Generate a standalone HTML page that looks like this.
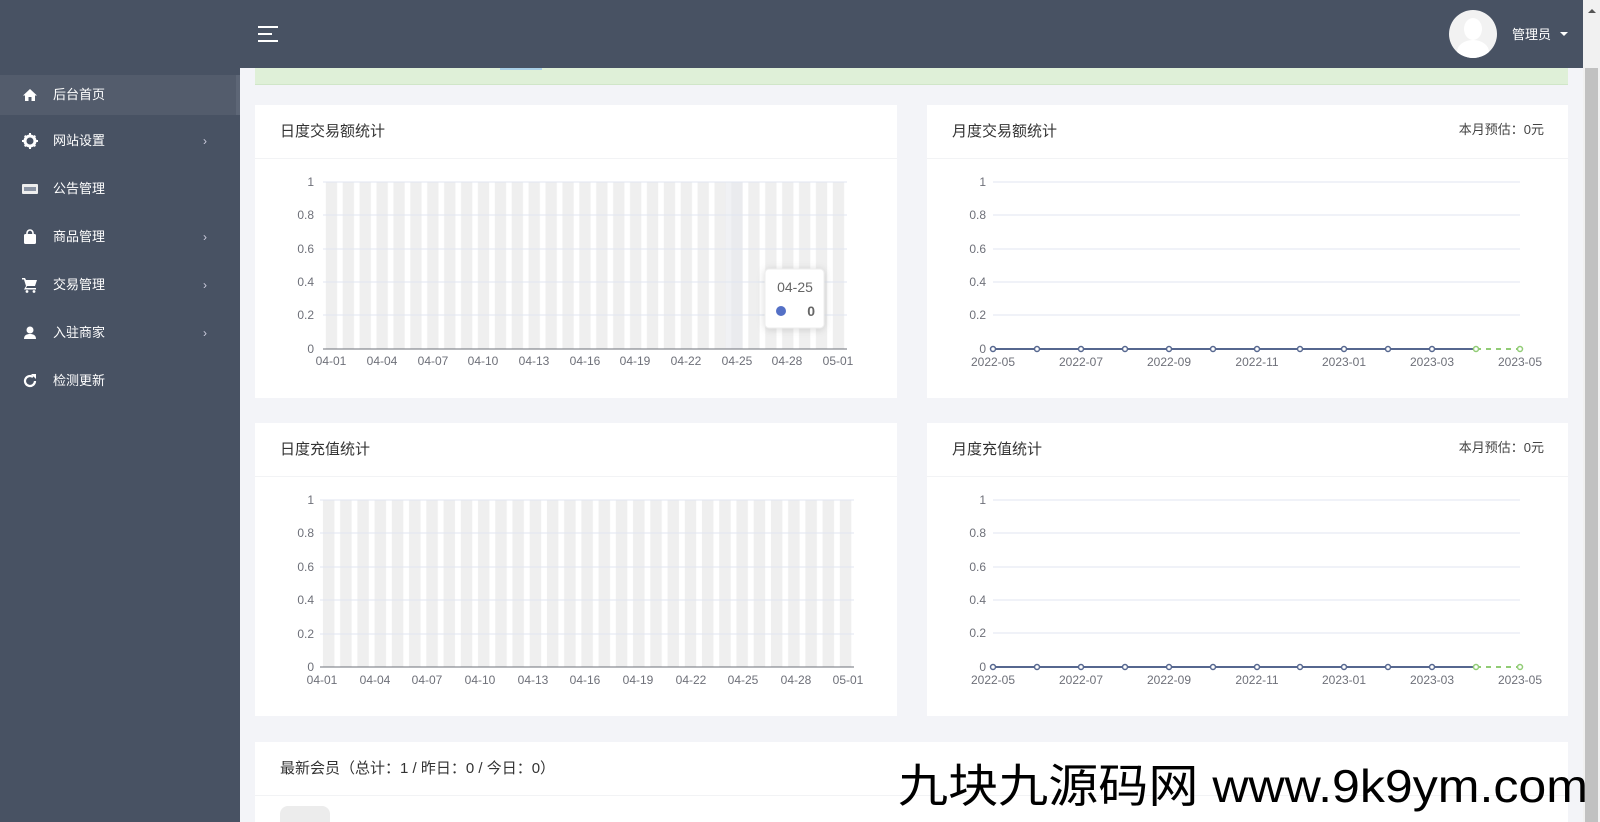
<!DOCTYPE html>
<html style="width:1600px;height:822px;overflow:hidden"><head><meta charset="utf-8"><style>
*{margin:0;padding:0;box-sizing:border-box}
body{width:1600px;height:822px;overflow:hidden;background:#f3f4f8;font-family:"Liberation Sans","Noto Sans CJK SC",sans-serif;position:relative}
.abs{position:absolute}
#side{left:0;top:0;width:240px;height:822px;background:#485263}
#head{left:240px;top:0;width:1343px;height:68px;background:#485263}
.mi{position:absolute;left:0;width:240px;height:40px;color:#fff;font-size:13px;line-height:40px}
.mi .t{position:absolute;left:53px}
.mi .ar{position:absolute;left:203px;font-size:12px;color:#ccd}
.mi svg{position:absolute;left:22px;top:12px}
.card{position:absolute;background:#fff}
.card .h{position:absolute;left:25px;top:0;height:54px;line-height:54px;font-size:15px;color:#333}
.card .dv{position:absolute;left:0;right:0;top:53px;height:1px;background:#f2f3f5}
.card .r{position:absolute;right:24px;top:0;line-height:50px;font-size:13px;color:#444}
</style></head><body>
<div id="side" class="abs">
 <div class="mi" style="top:75px;background:#535c6c;border-right:4px solid #5d6676"><svg width="16" height="16" viewBox="0 0 16 16"><path d="M8 2L1 8.5h2V14h3.5v-4h3v4H13V8.5h2z" fill="#fff"/></svg><span class="t">后台首页</span></div>
 <div class="mi" style="top:121px"><svg width="16" height="16" viewBox="0 0 16 16"><circle cx="8" cy="8" r="5" fill="none" stroke="#fff" stroke-width="3"/><path d="M7 0h2v3H7zM7 13h2v3H7zM0 7h3v2H0zM13 7h3v2h-3zM2 3.4L3.4 2 5 3.6 3.6 5zM11 12.4l1.4-1.4 1.6 1.6-1.4 1.4zM2 12.6l1.6-1.6L5 12.4 3.4 14zM11 3.6L12.6 2 14 3.4 12.4 5z" fill="#fff"/></svg><span class="t">网站设置</span><span class="ar">›</span></div>
 <div class="mi" style="top:169px"><svg width="16" height="16" viewBox="0 0 16 16"><rect x="0" y="3" width="16" height="10" rx="1" fill="#eee"/><rect x="2" y="6" width="12" height="4" fill="#8a93a3"/></svg><span class="t">公告管理</span></div>
 <div class="mi" style="top:217px"><svg width="16" height="16" viewBox="0 0 16 16"><path d="M5 5V4a3 3 0 0 1 6 0v1" fill="none" stroke="#fff" stroke-width="1.6"/><rect x="2" y="5" width="12" height="10" rx="1.5" fill="#fff"/></svg><span class="t">商品管理</span><span class="ar">›</span></div>
 <div class="mi" style="top:265px"><svg width="16" height="16" viewBox="0 0 16 16"><path d="M0 1h3l1 2h11l-2 6H5l-1 2h10v1.5H2l2-3.5L2 2.5H0z" fill="#fff"/><circle cx="5" cy="14.5" r="1.4" fill="#fff"/><circle cx="12" cy="14.5" r="1.4" fill="#fff"/></svg><span class="t">交易管理</span><span class="ar">›</span></div>
 <div class="mi" style="top:313px"><svg width="16" height="16" viewBox="0 0 16 16"><circle cx="8" cy="5" r="3.5" fill="#fff"/><path d="M2 14c0-4 3-5 6-5s6 1 6 5z" fill="#fff"/></svg><span class="t">入驻商家</span><span class="ar">›</span></div>
 <div class="mi" style="top:361px"><svg width="16" height="16" viewBox="0 0 16 16"><path d="M13 8a5 5 0 1 1-2-4" fill="none" stroke="#fff" stroke-width="2.2"/><path d="M9 1h5v5z" fill="#fff"/></svg><span class="t">检测更新</span></div>
</div>
<div id="head" class="abs">
 <div class="abs" style="left:18px;top:26px;width:20px;height:2px;background:#fff"></div>
 <div class="abs" style="left:18px;top:33px;width:14px;height:2px;background:#fff"></div>
 <div class="abs" style="left:18px;top:40px;width:20px;height:2px;background:#fff"></div>
 <div class="abs" style="left:1209px;top:10px;width:48px;height:48px;border-radius:50%;background:#f2f2f2;overflow:hidden"><div class="abs" style="left:15px;top:8px;width:18px;height:22px;border-radius:50%;background:#fff"></div><div class="abs" style="left:8px;top:30px;width:32px;height:24px;border-radius:50% 50% 0 0;background:#fff"></div></div>
 <div class="abs" style="left:1272px;top:24px;color:#fff;font-size:13px">管理员</div>
 <div class="abs" style="left:1320px;top:32px;border:4px solid transparent;border-top-color:#fff"></div>
</div>
<div class="abs" style="left:1583px;top:0;width:17px;height:822px;background:#f1f1f1"><div class="abs" style="left:2px;top:68px;width:13px;height:754px;background:#c1c1c1"></div><div class="abs" style="left:5px;top:5px;border:4px solid transparent;border-bottom-color:#555"></div></div>
<div class="abs" style="left:255px;top:68px;width:1313px;height:17px;background:#dff0d8;border-bottom:1px solid #d0e6c8"></div>
<div class="abs" style="left:500px;top:68px;width:42px;height:2px;background:#a9cfe6"></div>

<div class="card" style="left:255px;top:105px;width:642px;height:293px"><div class="h">日度交易额统计</div><div class="dv"></div></div>
<div class="card" style="left:927px;top:105px;width:641px;height:293px"><div class="h">月度交易额统计</div><div class="r">本月预估：0元</div><div class="dv"></div></div>
<div class="card" style="left:255px;top:423px;width:642px;height:293px"><div class="h">日度充值统计</div><div class="dv"></div></div>
<div class="card" style="left:927px;top:423px;width:641px;height:293px"><div class="h">月度充值统计</div><div class="r">本月预估：0元</div><div class="dv"></div></div>
<div class="card" style="left:255px;top:742px;width:1313px;height:80px;overflow:hidden"><div class="h" style="top:0">最新会员（总计：1 / 昨日：0 / 今日：0）</div><div class="dv"></div><div class="abs" style="left:25px;top:64px;width:50px;height:50px;border-radius:8px;background:#ececec"></div></div>

<svg class="abs" style="left:0;top:0" width="1600" height="822" font-family="Liberation Sans, sans-serif" font-size="12" fill="#6e7079">
<defs>
<pattern id="b1" x="323" y="0" width="16.9" height="10" patternUnits="userSpaceOnUse"><rect x="2.8" width="11.3" height="10" fill="#efefef"/></pattern>
<pattern id="b3" x="320" y="0" width="17.23" height="10" patternUnits="userSpaceOnUse"><rect x="2.9" width="11.5" height="10" fill="#efefef"/></pattern>
</defs>
<rect x="323" y="182" width="524" height="167" fill="url(#b1)"/>
<rect x="725.5" y="182" width="16.9" height="167" fill="#e6e8ec" opacity=".6"/>
<g stroke="#e0e6f1"><line x1="323" y1="182" x2="847" y2="182"/><line x1="323" y1="215" x2="847" y2="215"/><line x1="323" y1="249" x2="847" y2="249"/><line x1="323" y1="282" x2="847" y2="282"/><line x1="323" y1="315" x2="847" y2="315"/></g>
<line x1="323" y1="349" x2="847" y2="349" stroke="#6e7079"/>
<g text-anchor="end"><text x="314" y="186">1</text><text x="314" y="219">0.8</text><text x="314" y="253">0.6</text><text x="314" y="286">0.4</text><text x="314" y="319">0.2</text><text x="314" y="353">0</text></g>
<g text-anchor="middle"><text x="331" y="365">04-01</text><text x="382" y="365">04-04</text><text x="433" y="365">04-07</text><text x="483" y="365">04-10</text><text x="534" y="365">04-13</text><text x="585" y="365">04-16</text><text x="635" y="365">04-19</text><text x="686" y="365">04-22</text><text x="737" y="365">04-25</text><text x="787" y="365">04-28</text><text x="838" y="365">05-01</text></g>
<rect x="765" y="269" width="59" height="59" rx="4" fill="#fff" stroke="#eee" style="filter:drop-shadow(0 1px 4px rgba(0,0,0,.15))"/>
<text x="795" y="292" font-size="14" text-anchor="middle" fill="#666">04-25</text>
<circle cx="781" cy="311" r="5" fill="#5470c6"/>
<text x="815" y="316" font-size="14" font-weight="bold" text-anchor="end" fill="#666">0</text>
<rect x="320" y="500" width="534" height="167" fill="url(#b3)"/>
<g stroke="#e0e6f1"><line x1="320" y1="500" x2="854" y2="500"/><line x1="320" y1="533" x2="854" y2="533"/><line x1="320" y1="567" x2="854" y2="567"/><line x1="320" y1="600" x2="854" y2="600"/><line x1="320" y1="634" x2="854" y2="634"/></g>
<line x1="320" y1="667" x2="854" y2="667" stroke="#6e7079"/>
<g text-anchor="end"><text x="314" y="504">1</text><text x="314" y="537">0.8</text><text x="314" y="571">0.6</text><text x="314" y="604">0.4</text><text x="314" y="638">0.2</text><text x="314" y="671">0</text></g>
<g text-anchor="middle"><text x="322" y="684">04-01</text><text x="375" y="684">04-04</text><text x="427" y="684">04-07</text><text x="480" y="684">04-10</text><text x="533" y="684">04-13</text><text x="585" y="684">04-16</text><text x="638" y="684">04-19</text><text x="691" y="684">04-22</text><text x="743" y="684">04-25</text><text x="796" y="684">04-28</text><text x="848" y="684">05-01</text></g>
<g id="c2">
<g stroke="#e0e6f1"><line x1="993" y1="182" x2="1520" y2="182"/><line x1="993" y1="215" x2="1520" y2="215"/><line x1="993" y1="249" x2="1520" y2="249"/><line x1="993" y1="282" x2="1520" y2="282"/><line x1="993" y1="315" x2="1520" y2="315"/></g>
<g text-anchor="end"><text x="986" y="186">1</text><text x="986" y="219">0.8</text><text x="986" y="253">0.6</text><text x="986" y="286">0.4</text><text x="986" y="319">0.2</text><text x="986" y="353">0</text></g>
<line x1="993" y1="349" x2="1476" y2="349" stroke="#56678f" stroke-width="2"/>
<line x1="1476" y1="349" x2="1520" y2="349" stroke="#91cc75" stroke-width="2" stroke-dasharray="5 5"/>
<g fill="#fff" stroke="#56678f" stroke-width="1.5"><circle cx="993" cy="349" r="2.5"/><circle cx="1037" cy="349" r="2.5"/><circle cx="1081" cy="349" r="2.5"/><circle cx="1125" cy="349" r="2.5"/><circle cx="1169" cy="349" r="2.5"/><circle cx="1213" cy="349" r="2.5"/><circle cx="1257" cy="349" r="2.5"/><circle cx="1300" cy="349" r="2.5"/><circle cx="1344" cy="349" r="2.5"/><circle cx="1388" cy="349" r="2.5"/><circle cx="1432" cy="349" r="2.5"/></g>
<g fill="#fff" stroke="#91cc75" stroke-width="1.5"><circle cx="1476" cy="349" r="2.5"/><circle cx="1520" cy="349" r="2.5"/></g>
<g text-anchor="middle"><text x="993" y="366">2022-05</text><text x="1081" y="366">2022-07</text><text x="1169" y="366">2022-09</text><text x="1257" y="366">2022-11</text><text x="1344" y="366">2023-01</text><text x="1432" y="366">2023-03</text><text x="1520" y="366">2023-05</text></g>
</g>
<use href="#c2" y="318"/>
<text x="898" y="802" font-size="46" fill="#000" textLength="690" lengthAdjust="spacingAndGlyphs" font-family="Liberation Sans, Noto Sans CJK SC, sans-serif">九块九源码网 www.9k9ym.com</text>
</svg>
</body></html>
